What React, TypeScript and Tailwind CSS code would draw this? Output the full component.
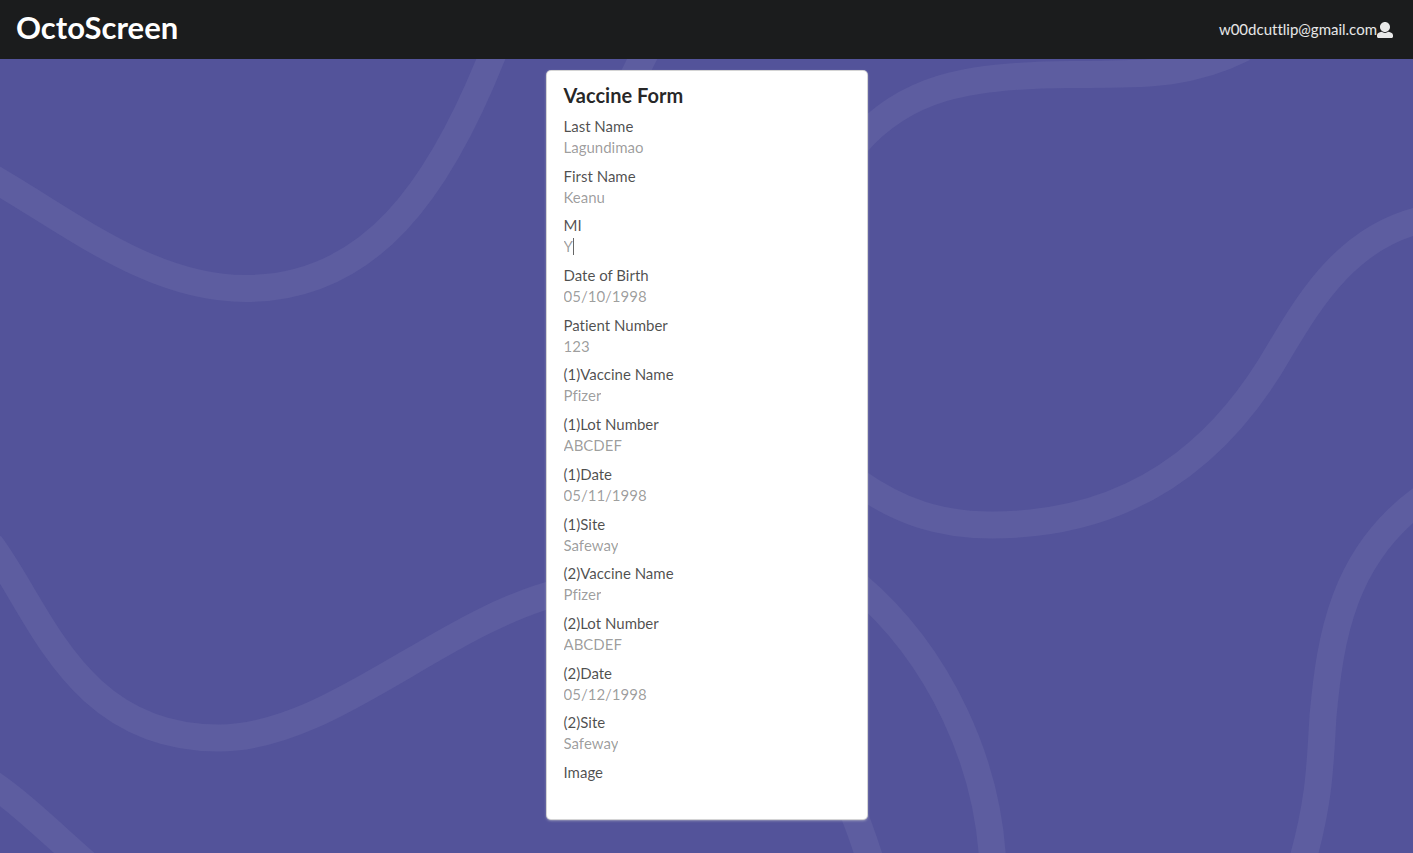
import { useState } from "react";

type Field = { id: string; label: string; value: string };

const initialFields: Field[] = [
  { id: "last-name", label: "Last Name", value: "Lagundimao" },
  { id: "first-name", label: "First Name", value: "Keanu" },
  { id: "mi", label: "MI", value: "Y" },
  { id: "dob", label: "Date of Birth", value: "05/10/1998" },
  { id: "patient-number", label: "Patient Number", value: "123" },
  { id: "vaccine-1", label: "(1)Vaccine Name", value: "Pfizer" },
  { id: "lot-1", label: "(1)Lot Number", value: "ABCDEF" },
  { id: "date-1", label: "(1)Date", value: "05/11/1998" },
  { id: "site-1", label: "(1)Site", value: "Safeway" },
  { id: "vaccine-2", label: "(2)Vaccine Name", value: "Pfizer" },
  { id: "lot-2", label: "(2)Lot Number", value: "ABCDEF" },
  { id: "date-2", label: "(2)Date", value: "05/12/1998" },
  { id: "site-2", label: "(2)Site", value: "Safeway" },
];

const waves = [
  "M-14 174 C70 222 150 288.5 245.5 288.5 C370 288.5 440 190 496 46",
  "M649 46 C640 62 632 80 622 100",
  "M856 144 C905 88 965 75 1071 74.5 C1150 74 1190 75 1244 48",
  "M1430 218 C1350 232 1310 300 1280 350 C1240 420 1160 525 992 525 C940 525 900 512 856 481",
  "M-10 544 C40 610 75 738 219 738 C330 738 440 622 560 592",
  "M856 584 C940 655 990 765 993 870",
  "M848 800 C856 818 864 840 872 866",
  "M-12 781 C20 802 50 832 90 867",
  "M1427 495 C1342 553 1330 640 1323 716 C1320 765 1320 800 1301 866",
];

function Waves() {
  return (
    <svg
      className="absolute inset-0 h-full w-full"
      viewBox="0 59 1413 794"
      preserveAspectRatio="xMidYMin slice"
      fill="none"
      stroke="#5d5da0"
      strokeWidth="27"
      aria-hidden="true"
    >
      {waves.map((d) => (
        <path key={d} d={d} />
      ))}
    </svg>
  );
}

function UserIcon() {
  return (
    <svg viewBox="0 0 512 512" className="size-4 fill-current" aria-hidden="true">
      <path d="M256 0c88.366 0 160 71.634 160 160s-71.634 160-160 160S96 248.366 96 160 167.634 0 256 0zm183.283 333.821l-71.313-17.828c-74.923 53.89-165.738 41.864-223.94 0l-71.313 17.828C29.981 344.505 0 382.903 0 426.955V464c0 26.51 21.49 48 48 48h416c26.51 0 48-21.49 48-48v-37.045c0-44.052-29.981-82.45-72.717-93.134z" />
    </svg>
  );
}

export default function App() {
  const [fields, setFields] = useState(initialFields);

  const update = (id: string, value: string) =>
    setFields((all) => all.map((f) => (f.id === id ? { ...f, value } : f)));

  return (
    <div className="flex min-h-screen flex-col bg-[#53539a] font-['Lato',sans-serif] text-[15px] [font-variant-ligatures:none]">
      <header className="flex items-center justify-between bg-[#1b1c1d] pr-5 pl-4">
        <h1 className="pt-2 pb-3 text-[31px] leading-[39px] font-bold text-white">OctoScreen</h1>
        <a href="#account" className="flex items-center text-white/90">
          w00dcuttlip@gmail.com
          <UserIcon />
        </a>
      </header>

      <main className="relative flex flex-1 justify-center overflow-hidden px-4 pt-3 pb-8">
        <Waves />
        <form className="relative flex min-h-[748px] w-full max-w-[320px] flex-col self-start rounded-[4px] bg-white px-[17px] pt-3 pb-9 shadow-[0_1px_3px_0_#d4d4d5,0_0_0_1px_#d4d4d5]">
          <h2 className="text-xl leading-[25px] font-bold text-black/85">Vaccine Form</h2>
          <div className="mt-2 flex flex-1 flex-col justify-between">
            {fields.map((f) => (
              <div key={f.id} className="flex flex-col">
                <label htmlFor={f.id} className="leading-[21px] text-black/70">
                  {f.label}
                </label>
                <div className="flex h-[21px] items-center">
                  <input
                    id={f.id}
                    value={f.value}
                    onChange={(e) => update(f.id, e.target.value)}
                    className="[field-sizing:content] leading-[21px] text-black/40 outline-none"
                  />
                  {f.id === "mi" && <span className="h-[17px] w-px bg-black/60" />}
                </div>
              </div>
            ))}
            <div className="leading-[21px] text-black/70">Image</div>
          </div>
        </form>
      </main>
    </div>
  );
}
